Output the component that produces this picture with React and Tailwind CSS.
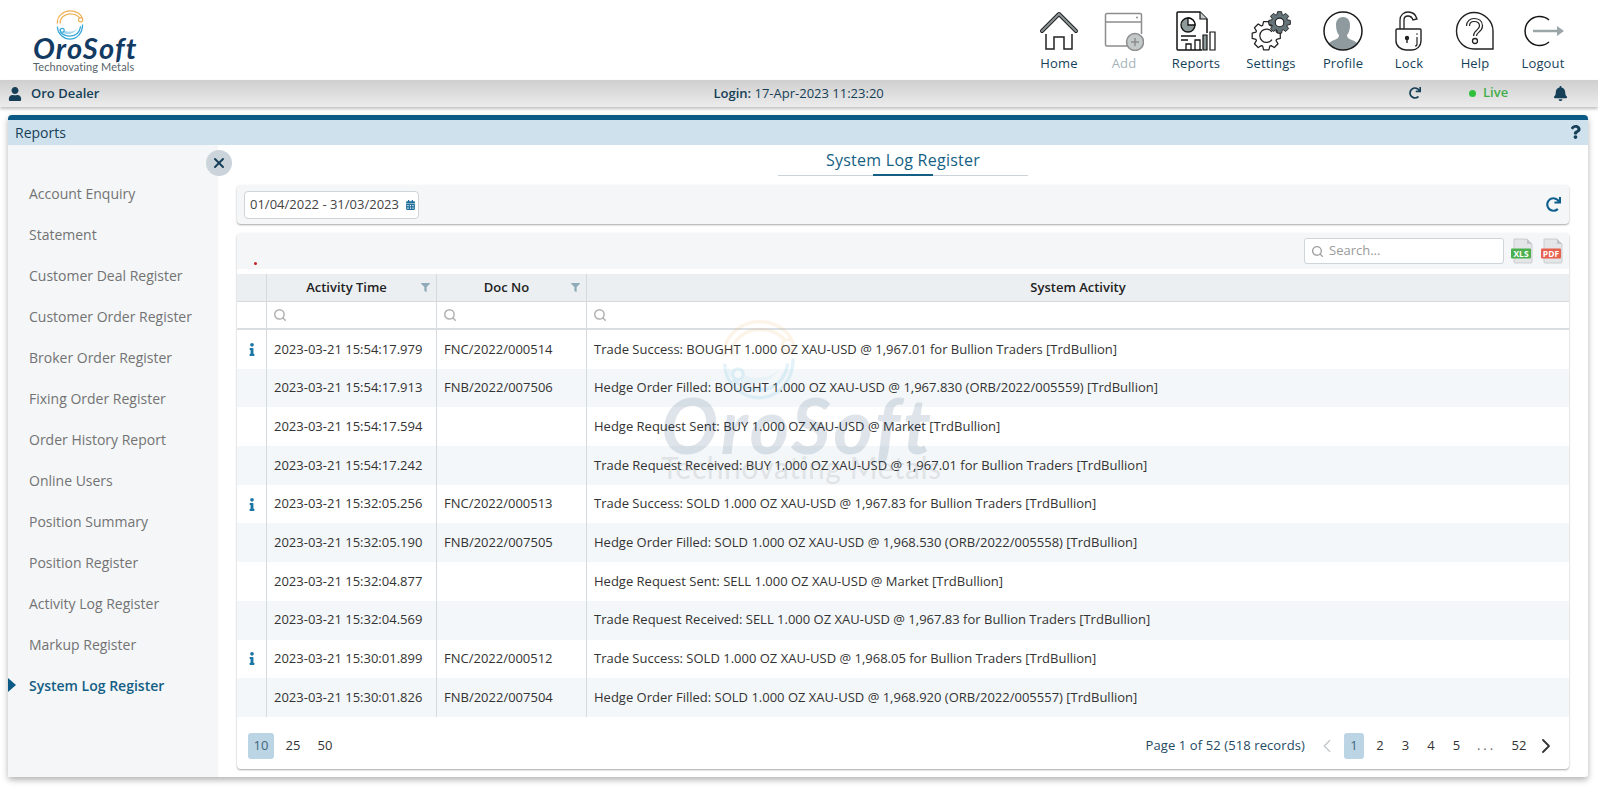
import { Search, ChevronLeft, ChevronRight, X } from "lucide-react";
import { FaUser, FaBell, FaInfo, FaQuestion, FaRedo, FaFilter, FaCalendarAlt } from "react-icons/fa";

const menu = [
  "Account Enquiry",
  "Statement",
  "Customer Deal Register",
  "Customer Order Register",
  "Broker Order Register",
  "Fixing Order Register",
  "Order History Report",
  "Online Users",
  "Position Summary",
  "Position Register",
  "Activity Log Register",
  "Markup Register",
  "System Log Register",
];

const rows = [
  { info: true, time: "2023-03-21 15:54:17.979", doc: "FNC/2022/000514", text: "Trade Success: BOUGHT 1.000 OZ XAU-USD @ 1,967.01 for Bullion Traders [TrdBullion]" },
  { time: "2023-03-21 15:54:17.913", doc: "FNB/2022/007506", text: "Hedge Order Filled: BOUGHT 1.000 OZ XAU-USD @ 1,967.830 (ORB/2022/005559) [TrdBullion]" },
  { time: "2023-03-21 15:54:17.594", doc: "", text: "Hedge Request Sent: BUY 1.000 OZ XAU-USD @ Market [TrdBullion]" },
  { time: "2023-03-21 15:54:17.242", doc: "", text: "Trade Request Received: BUY 1.000 OZ XAU-USD @ 1,967.01 for Bullion Traders [TrdBullion]" },
  { info: true, time: "2023-03-21 15:32:05.256", doc: "FNC/2022/000513", text: "Trade Success: SOLD 1.000 OZ XAU-USD @ 1,967.83 for Bullion Traders [TrdBullion]" },
  { time: "2023-03-21 15:32:05.190", doc: "FNB/2022/007505", text: "Hedge Order Filled: SOLD 1.000 OZ XAU-USD @ 1,968.530 (ORB/2022/005558) [TrdBullion]" },
  { time: "2023-03-21 15:32:04.877", doc: "", text: "Hedge Request Sent: SELL 1.000 OZ XAU-USD @ Market [TrdBullion]" },
  { time: "2023-03-21 15:32:04.569", doc: "", text: "Trade Request Received: SELL 1.000 OZ XAU-USD @ 1,967.83 for Bullion Traders [TrdBullion]" },
  { info: true, time: "2023-03-21 15:30:01.899", doc: "FNC/2022/000512", text: "Trade Success: SOLD 1.000 OZ XAU-USD @ 1,968.05 for Bullion Traders [TrdBullion]" },
  { time: "2023-03-21 15:30:01.826", doc: "FNB/2022/007504", text: "Hedge Order Filled: SOLD 1.000 OZ XAU-USD @ 1,968.920 (ORB/2022/005557) [TrdBullion]" },
];

const gear = (cx, cy, r, R, teeth) => {
  const pts = [];
  const step = (Math.PI * 2) / teeth;
  for (let i = 0; i < teeth; i++) {
    const a = i * step;
    [[-0.3, r], [-0.17, R], [0.17, R], [0.3, r]].forEach(([o, d]) => {
      pts.push(`${(cx + Math.cos(a + o * step * 1.4) * d).toFixed(2)} ${(cy + Math.sin(a + o * step * 1.4) * d).toFixed(2)}`);
    });
  }
  return "M" + pts.join("L") + "Z";
};

function LogoMark({ className }) {
  return (
    <svg viewBox="0 0 30 32" fill="none" className={className}>
      <path d="M2 14C1 6 9 1 15 1c6 0 11 3 13 8" stroke="#eeb257" strokeWidth="1.3" />
      <path d="M5 14C4 8 10 4 15 4c5 0 9 2 11 6" stroke="#eeb257" strokeWidth="1.3" />
      <circle cx="26" cy="10" r="2.2" stroke="#eeb257" strokeWidth="1.2" fill="#fff" />
      <path d="M2 17c0 8 7 13 13 13 7 0 13-6 13-15" stroke="#37a7d8" strokeWidth="1.3" />
      <path d="M5 23c3 3 6 4 10 4 6 0 10-4 11-10" stroke="#37a7d8" strokeWidth="1.3" />
      <path d="M2 18c1 4 4 5 6 6 5 2 12 0 15-5-3 3-8 4-12 3-4-1-6-2-9-4Z" fill="#a5d8ef" />
      <circle cx="7" cy="21" r="2" stroke="#37a7d8" strokeWidth="1.2" fill="#fff" />
    </svg>
  );
}

const HomeIcon = () => (
  <svg viewBox="0 0 40 40" fill="none" className="w-[40px] h-[40px]">
    <path d="M3 20 20 3l17 17" stroke="#222" strokeWidth="4" strokeLinejoin="round" strokeLinecap="round" />
    <path d="M3 20 20 3l17 17" stroke="#8b9496" strokeWidth="2" strokeLinejoin="round" strokeLinecap="round" />
    <path d="M7 23v15h8V26h10v12h8V23" stroke="#222" strokeWidth="1.5" />
  </svg>
);

const AddIcon = () => (
  <svg viewBox="0 0 40 40" fill="none" className="w-[40px] h-[40px]">
    <path d="M24 35H3a1.500 1.500 0 0 1-1.500-1.500V4A1.500 1.500 0 0 1 3 2.500h33A1.500 1.500 0 0 1 37.500 4v19" stroke="#8d8d8d" strokeWidth="1.5" />
    <path d="M2 11h35" stroke="#8d8d8d" strokeWidth="1.5" />
    <circle cx="33" cy="6.500" r="1" fill="#8d8d8d" />
    <circle cx="31" cy="31" r="8.500" fill="#c3c8c8" stroke="#8d8d8d" strokeWidth="1.5" />
    <path d="M31 27v8M27 31h8" stroke="#8d8d8d" strokeWidth="1.5" />
  </svg>
);

const ReportsIcon = () => (
  <svg viewBox="0 0 40 40" fill="none" className="w-[40px] h-[40px]">
    <path d="M26 39H2a1 1 0 0 1-1-1V2a1 1 0 0 1 1-1h22l7 7v14" stroke="#111" strokeWidth="1.5" />
    <path d="M24 1v7h7" fill="#c4cbcc" stroke="#111" strokeWidth="1.2" />
    <circle cx="12" cy="14" r="7" fill="#8f9a9b" stroke="#111" strokeWidth="1.3" />
    <path d="M12 7v7h7c0-4-3-7-7-7Z" fill="#fff" stroke="#111" strokeWidth="1.3" />
    <path d="M5 25h15M5 29h7" stroke="#111" strokeWidth="1.5" />
    <path d="M10 39v-6h5v6M19 39V29h5v10" stroke="#111" strokeWidth="1.3" />
    <path d="M27 39V24h4v15z" fill="#8f9a9b" stroke="#111" strokeWidth="1.2" />
    <path d="M34 39V21h5v18z" fill="#fff" stroke="#111" strokeWidth="1.2" />
  </svg>
);

const SettingsIcon = () => (
  <svg viewBox="0 0 42 42" fill="none" className="w-[40px] h-[40px]">
    <path d={gear(16, 26, 11.500, 15, 8)} fill="#fff" stroke="#222" strokeWidth="1.3" strokeLinejoin="round" />
    <path d="M22 22a7 7 0 1 0 0 8" stroke="#222" strokeWidth="1.3" />
    <path d={gear(30, 12, 8.500, 11.500, 8)} fill="#66757a" stroke="#222" strokeWidth="1" strokeLinejoin="round" />
    <circle cx="30" cy="12" r="4.500" fill="#fff" stroke="#222" strokeWidth="1.2" />
  </svg>
);

const ProfileIcon = () => (
  <svg viewBox="0 0 40 40" fill="none" className="w-[40px] h-[40px]">
    <circle cx="20" cy="20" r="19" fill="#fff" />
    <path d="M20 6c-5 0-7 4-7 8 0 4 1 8 3 10 0 3-2 4-5 5-3 1-5 3-6 4 3 4 9 6 15 6s12-2 15-6c-1-1-3-3-6-4-3-1-5-2-5-5 2-2 3-6 3-10 0-4-2-8-7-8Z" fill="#8e9a9d" />
    <circle cx="20" cy="20" r="19" stroke="#1b1b1b" strokeWidth="1.5" />
  </svg>
);

const LockIcon = () => (
  <svg viewBox="0 0 28 40" fill="none" className="w-[28px] h-[40px]">
    <path d="M5 18V9c0-5 4-8 8-8 5 0 8 3 9 7l-4 1c-1-3-3-4-5-4-3 0-4 2-4 4v9" fill="#fff" stroke="#222" strokeWidth="1.3" />
    <path d="M2 18h23a1 1 0 0 1 1 1v11c0 5-4 9-9 9h-6c-5 0-10-4-10-9V19a1 1 0 0 1 1-1Z" fill="#fff" stroke="#222" strokeWidth="1.4" />
    <circle cx="12" cy="27" r="2.200" fill="#222" />
    <path d="M12 28v4" stroke="#222" strokeWidth="1.400" />
    <path d="M22 26v7c0 1-1 2-2 2" stroke="#222" strokeWidth="1.200" />
    <circle cx="22" cy="23" r="0.800" fill="#222" />
  </svg>
);

const HelpIcon = () => (
  <svg viewBox="0 0 40 40" fill="none" className="w-[40px] h-[40px]">
    <path d="M38 38H19C9 38 1.500 30 1.500 20S9 1.500 19 1.500 38 10 38 20Z" stroke="#222" strokeWidth="1.4" />
    <path d="M13 15c0-4 3-6 6-6 4 0 7 2 7 6 0 5-6 5-6 10" stroke="#222" strokeWidth="4.200" />
    <path d="M13 15c0-4 3-6 6-6 4 0 7 2 7 6 0 5-6 5-6 10" stroke="#fff" strokeWidth="1.800" />
    <circle cx="20" cy="30" r="2.500" fill="#fff" stroke="#222" strokeWidth="1.300" />
  </svg>
);

const LogoutIcon = () => (
  <svg viewBox="0 0 44 40" fill="none" className="w-[44px] h-[40px]">
    <path d="M28 9A14.500 14.500 0 1 0 28 31" stroke="#151515" strokeWidth="1.500" />
    <path d="M12 20h27" stroke="#9aa6a8" strokeWidth="2.500" />
    <path d="m36 15 7 5-7 5z" fill="#9aa6a8" />
  </svg>
);

const nav = [
  { label: "Home", Icon: HomeIcon, w: "w-[62px]" },
  { label: "Add", Icon: AddIcon, w: "w-[68px]", off: true },
  { label: "Reports", Icon: ReportsIcon, w: "w-[76px]" },
  { label: "Settings", Icon: SettingsIcon, w: "w-[74px]" },
  { label: "Profile", Icon: ProfileIcon, w: "w-[70px]" },
  { label: "Lock", Icon: LockIcon, w: "w-[62px]" },
  { label: "Help", Icon: HelpIcon, w: "w-[70px]" },
  { label: "Logout", Icon: LogoutIcon, w: "w-[66px]" },
];

function FileBadge({ label, color }) {
  return (
    <svg viewBox="0 0 22 26" className="w-[22px] h-[26px]">
      <path d="M3 1h13l5 5v18a1 1 0 0 1-1 1H4a1 1 0 0 1-1-1Z" fill="#e3e5e6" stroke="#c3c6c8" strokeWidth="0.800" />
      <path d="M16 1v5h5Z" fill="#c3c6c8" />
      <rect x="0" y="10.500" width="20" height="10" rx="1" fill={color} />
      <text x="10" y="18.500" textAnchor="middle" fontSize="8.500" fontWeight="700" fill="#fff" fontFamily="Open Sans, sans-serif">{label}</text>
    </svg>
  );
}

const cols = "grid grid-cols-[30px_170px_150px_1fr]";

export default function App() {
  return (
    <div className="h-[787px] bg-white overflow-hidden font-['Open_Sans',sans-serif] text-[#333]">
      <header className="h-[80px] flex items-start justify-between pr-[22px]">
        <div className="pl-[33px] pt-[10px] w-[140px] flex flex-col">
          <LogoMark className="w-[30px] h-[31px] ml-[22px]" />
          <span className="font-['Lato',sans-serif] italic font-bold text-[29px] leading-[22px] tracking-[1.2px] text-[#123a63] -mt-[4px] whitespace-nowrap">OroSoft</span>
          <span className="font-['Lato',sans-serif] text-[11px] leading-[11px] mt-[2px] tracking-[0.1px] text-[#57636b] whitespace-nowrap">Technovating Metals</span>
        </div>
        <nav className="flex pt-[11px]">
          {nav.map(({ label, Icon, w, off }) => (
            <div key={label} className={`${w} flex flex-col items-center`}>
              <div className="h-[40px] flex items-center justify-center"><Icon /></div>
              <span className={`mt-[3px] text-[13px] leading-[18px] font-medium tracking-[0.15px] ${off ? "text-[#a6b4bc]" : "text-[#163f58]"}`}>{label}</span>
            </div>
          ))}
        </nav>
      </header>

      <div className="h-[27px] relative flex items-center bg-gradient-to-b from-[#cfcfcf] to-[#ececec] shadow-[0_2px_3px_rgba(0,0,0,0.25)] text-[13px] text-[#163f58]">
        <FaUser className="ml-[8px] w-[14px] h-[14px]" />
        <span className="ml-[9px] font-semibold">Oro Dealer</span>
        <span className="ml-[614px] text-[13px]"><b className="font-semibold">Login:</b> 17-Apr-2023 11:23:20</span>
        <FaRedo className="absolute left-[1409px] top-[7px] w-[12px] h-[12px]" />
        <span className="absolute left-[1469px] top-[10px] w-[7px] h-[7px] rounded-full bg-[#2fc13c]" />
        <span className="absolute left-[1483px] top-[3px] font-semibold text-[#3fae49]">Live</span>
        <FaBell className="absolute left-[1553px] top-[6px] w-[15px] h-[15px]" />
      </div>

      <main className="mt-[8px] ml-[8px] w-[1580px] h-[662px] rounded-t-[4px] rounded-b-[3px] border-t-[5px] border-[#0b5a85] bg-white shadow-[0_3px_6px_rgba(0,0,0,0.3)] flex flex-col">
        <div className="h-[25px] shrink-0 bg-[#cee1ed] flex items-center justify-between pl-[7px] pr-[7px] pb-[1px] text-[14px] text-[#163f58]">
          <span className="font-medium">Reports</span>
          <FaQuestion className="w-[11px] h-[14px] text-[#163f58]" />
        </div>
        <div className="flex flex-1 min-h-0">
          <aside className="relative w-[210px] shrink-0 bg-[#f4f6f8] pt-[28px]">
            <button className="absolute -right-[14px] top-[5px] w-[26px] h-[26px] rounded-full bg-[#cbd4da] flex items-center justify-center text-[#163f58]">
              <X className="w-[16px] h-[16px]" strokeWidth={3} />
            </button>
            {menu.map((m, i) => (
              <div key={m} className={`relative h-[41px] flex items-center pl-[21px] text-[14px] whitespace-nowrap ${i === menu.length - 1 ? "font-semibold text-[#155f85]" : "text-[#737373]"}`}>
                {i === menu.length - 1 && <span className="absolute left-0 top-[13px] border-y-[7px] border-y-transparent border-l-[8px] border-l-[#0b5a85]" />}
                {m}
              </div>
            ))}
          </aside>

          <section className="flex-1 min-w-0 pl-[19px] pr-[19px] pt-[3px] pb-[8px] flex flex-col">
            <div className="h-[28px] relative flex justify-center">
              <div className="w-[250px] h-[28px] border-b border-[#cdd4d9] relative text-center text-[16px] tracking-[0.25px] font-medium leading-[24px] text-[#155f85]">
                System Log Register
                <span className="absolute left-[95px] -bottom-[1px] w-[60px] h-[2px] bg-[#155f85]" />
              </div>
            </div>

            <div className="mt-[9px] h-[39px] rounded-[4px] bg-[#f4f6f8] shadow-[0_1px_2px_rgba(0,0,0,0.35)] flex items-center justify-between pl-[7px] pr-[8px]">
              <div className="h-[28px] w-[175px] bg-white border border-[#cfd4d8] rounded-[4px] flex items-center justify-between pl-[5px] pr-[3px] text-[13px] text-[#444]">
                <span>01/04/2022 - 31/03/2023</span>
                <FaCalendarAlt className="w-[9px] h-[10px] text-[#1d6e9c]" />
              </div>
              <FaRedo className="w-[15px] h-[15px] text-[#0f5f8c]" />
            </div>

            <div className="relative mt-[9px] flex-1 rounded-[4px] bg-white shadow-[0_1px_2px_rgba(0,0,0,0.35)] flex flex-col overflow-hidden">
              <div className="h-[36px] shrink-0 bg-[#f4f6f8] relative flex items-center justify-end pr-[6px]">
                <span className="absolute left-[17px] top-[29px] w-[3px] h-[3px] rounded-full bg-[#c22222]" />
                <div className="h-[26px] w-[200px] bg-white border border-[#cfd4d8] rounded-[3px] flex items-center pl-[6px] gap-[5px] text-[13px] text-[#9a9a9a]">
                  <Search className="w-[13px] h-[13px] text-[#a0a0a0]" strokeWidth={2.500} />
                  <span>Search...</span>
                </div>
                <div className="ml-[7px]"><FileBadge label="XLS" color="#4caf50" /></div>
                <div className="ml-[8px]"><FileBadge label="PDF" color="#e8604f" /></div>
              </div>
              <div className="h-[5px] shrink-0" />

              <div className={`${cols} h-[28px] shrink-0 bg-[#eceff1] text-[13px] font-semibold text-[#222] border-b border-[#d5dade]`}>
                <div className="border-r border-[#d5dade]" />
                <div className="relative border-r border-[#d5dade] flex items-center justify-center pr-[10px]">
                  Activity Time
                  <FaFilter className="absolute right-[6px] top-[9px] w-[9px] h-[9px] text-[#8fabb9]" />
                </div>
                <div className="relative border-r border-[#d5dade] flex items-center justify-center pr-[10px]">
                  Doc No
                  <FaFilter className="absolute right-[6px] top-[9px] w-[9px] h-[9px] text-[#8fabb9]" />
                </div>
                <div className="flex items-center justify-center">System Activity</div>
              </div>
              <div className={`${cols} h-[28px] shrink-0 border-b-2 border-[#d9dee2]`}>
                <div className="border-r border-[#d5dade]" />
                {[0, 1].map((k) => (
                  <div key={k} className="border-r border-[#d5dade] flex items-center pl-[6px]">
                    <Search className="w-[14px] h-[14px] text-[#b0b0b0]" strokeWidth={2.500} />
                  </div>
                ))}
                <div className="flex items-center pl-[6px]"><Search className="w-[14px] h-[14px] text-[#b0b0b0]" strokeWidth={2.500} /></div>
              </div>

              {rows.map((r, i) => (
                <div key={r.time} className={`${cols} h-[38.700px] shrink-0 text-[13px] text-[#333] ${i % 2 ? "bg-[#f4f7f9]" : "bg-white"}`}>
                  <div className="border-r border-[#d5dade] flex items-center justify-center">
                    {r.info && <FaInfo className="w-[8px] h-[13px] text-[#1c76a6]" />}
                  </div>
                  <div className="border-r border-[#d5dade] flex items-center pl-[7px]">{r.time}</div>
                  <div className="border-r border-[#d5dade] flex items-center pl-[7px]">{r.doc}</div>
                  <div className="flex items-center pl-[7px] whitespace-nowrap">{r.text}</div>
                </div>
              ))}

              <div className="flex-1 flex items-center justify-between pl-[11px] pr-[11px] pt-[6px] text-[13px] text-[#333]">
                <div className="flex items-center">
                  <span className="w-[26px] h-[26px] rounded-[3px] bg-[#bcd5e4] flex items-center justify-center text-[#41657c]">10</span>
                  <span className="w-[32px] text-center ml-[3px]">25</span>
                  <span className="w-[32px] text-center">50</span>
                </div>
                <div className="flex items-center">
                  <span className="text-[#1f4a63] font-medium tracking-[0.1px] mr-[11px]">Page 1 of 52 (518 records)</span>
                  <ChevronLeft className="w-[22px] h-[22px] text-[#c3c8cc]" strokeWidth={1.500} />
                  <span className="ml-[6px] w-[20px] h-[26px] rounded-[3px] bg-[#bcd5e4] flex items-center justify-center text-[#41657c]">1</span>
                  <span className="w-[26px] ml-[3px] text-center">2</span>
                  <span className="w-[25px] text-center">3</span>
                  <span className="w-[26px] text-center">4</span>
                  <span className="w-[25px] text-center">5</span>
                  <span className="w-[35px] text-center tracking-[3px] text-[#666]">...</span>
                  <span className="w-[30px] text-center">52</span>
                  <ChevronRight className="w-[24px] h-[24px] text-[#333]" strokeWidth={1.800} />
                </div>
              </div>

              <div className="absolute left-[424px] top-[86px] w-[275px] flex flex-col opacity-[0.13] pointer-events-none">
                <LogoMark className="w-[80px] h-[84px] ml-[58px]" />
                <span className="font-['Lato',sans-serif] italic font-bold text-[76px] leading-[60px] tracking-[3px] text-[#123a63] -mt-[8px] whitespace-nowrap">OroSoft</span>
                <span className="font-['Lato',sans-serif] text-[30px] leading-[32px] -mt-[4px] tracking-[0.5px] text-[#57636b] whitespace-nowrap">Technovating Metals</span>
              </div>
            </div>
          </section>
        </div>
      </main>
    </div>
  );
}
